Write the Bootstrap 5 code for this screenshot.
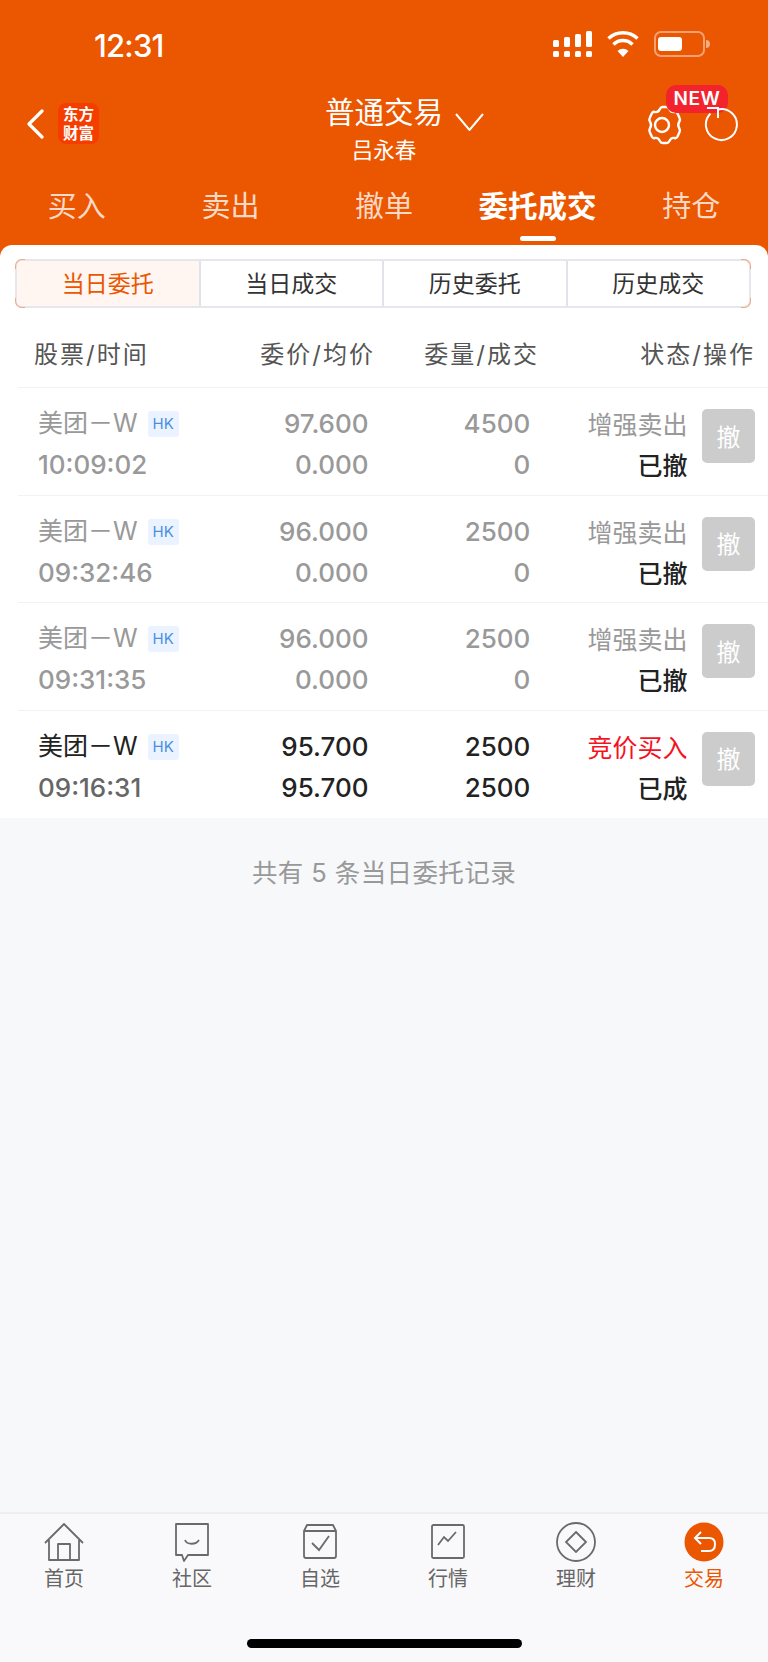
<!DOCTYPE html>
<html lang="zh">

<head>
    <meta charset="UTF-8" />
    <title>普通交易</title>
    <link href="https://cdn.jsdelivr.net/npm/bootstrap@5.3.2/dist/css/bootstrap.min.css" rel="stylesheet" />
    <style>
        html, body { height: 100%; }
        body { font-family: Inter, "Noto Sans CJK SC", sans-serif; background: #f7f8fa; color: #222; }
        .app-page { height: 1662px; }
        .app-top { background: #eb5600; height: 259px; color: #fff; }
        .status-line { height: 92px; padding: 29px 58px 0 94px; }
        .status-time { font-size: 31px; font-weight: 500; line-height: 34px; letter-spacing: -.8px; }
        .title-line { height: 76px; padding: 0 26px; }
        .title-side { width: 130px; }
        .logo-box { width: 41px; height: 41px; background: #f53d00; border-radius: 8px; font-family: "Noto Sans CJK SC", sans-serif; font-size: 15.5px; font-weight: 700; line-height: 19px; margin-left: 14px; padding-top: 1px; }
        .title-left { margin-top: 11px; }
        .title-center { font-family: "Noto Sans CJK SC", sans-serif; margin-top: -3px; }
        .title-main { font-size: 29.5px; line-height: 38px; font-weight: 400; }
        .title-sub { font-size: 21.5px; line-height: 30px; margin-top: 3px; }
        .title-arrow { margin-right: -41px; margin-left: 12px; margin-top: 24px; }
        .title-right { height: 40px; margin-top: 13px; }
        .gear-icon { margin-right: 20px; }
        .ring-icon { margin-top: 1px; margin-right: 4px; position: relative; z-index: 2; }
        .new-tag { position: absolute; left: 54px; top: -20px; width: 62px; height: 28px; background: #f3232e; border-radius: 10px; font-size: 19px; font-weight: 600; line-height: 28px; text-align: center; letter-spacing: .5px; }
        .tab-line { height: 77px; }
        .tab-line .nav-link { color: rgba(255, 255, 255, .78); font-family: "Noto Sans CJK SC", sans-serif; font-size: 29px; line-height: 38px; padding: 17px 0 0; position: relative; }
        .tab-line .nav-link.active { color: #fff; font-weight: 700; font-size: 29.5px; }
        .tab-line .nav-link.active::after { content: ""; position: absolute; left: 50%; margin-left: -18px; top: 68px; width: 36px; height: 5px; background: #fff; border-radius: 3px; }
        .white-panel { background: #fff; border-radius: 12px 12px 0 0; margin-top: -14px; position: relative; }
        .seg-wrap { padding: 14px 17px 0 15px; }
        .seg-group { height: 49px; border: 2px solid #e6e7ec; border-radius: 7px; }
        .seg-item { flex: 1 1 0; font-size: 23px; color: #333; text-align: center; line-height: 47px; border-left: 2px solid #e1e3e9; position: relative; }
        .seg-item:first-child { border-left: 0; background: #fff5f1; color: #eb5600; border-radius: 5px 0 0 5px; }
        .seg-item:first-child::before, .seg-item:first-child::after, .seg-item:last-child::before, .seg-item:last-child::after { content: ""; position: absolute; width: 10px; height: 10px; border: 0 solid #f2a985; }
        .seg-item:first-child::before { left: -2px; top: -2px; border-width: 1.5px 0 0 1.5px; border-top-left-radius: 7px; }
        .seg-item:first-child::after { left: -2px; bottom: -2px; border-width: 0 0 1.5px 1.5px; border-bottom-left-radius: 7px; }
        .seg-item:last-child::before { right: -2px; top: -2px; border-width: 1.5px 1.5px 0 0; border-top-right-radius: 7px; }
        .seg-item:last-child::after { right: -2px; bottom: -2px; border-width: 0 1.5px 1.5px 0; border-bottom-right-radius: 7px; }
        .list-head { height: 80px; padding-top: 27px; font-size: 24px; line-height: 40px; color: #555; margin-left: 18px; border-bottom: 1px solid #f2f2f4; padding-left: 16px; letter-spacing: 2px; }
        .head-a { width: 155px; }
        .head-b { width: 186px; text-align: right; }
        .head-c { width: 164px; text-align: right; }
        .head-d { width: 216px; text-align: right; }
        .order-row { height: 107.6px; margin-left: 18px; padding: 15px 13px 0 20px; border-bottom: 1px solid #f2f2f4; color: #999; font-size: 26px; font-weight: 500; line-height: 41px; }
        .order-row:last-child { border-bottom: 0; }
        .col-name { width: 191px; }
        .col-price { width: 140px; text-align: right; }
        .col-qty { width: 162px; text-align: right; }
        .col-state { width: 157.5px; text-align: right; font-family: "Noto Sans CJK SC", sans-serif; font-size: 25px; font-weight: 400; }
        .stock-name { font-size: 25px; font-weight: 400; white-space: nowrap; }
        .hk-tag { display: inline-block; width: 31px; height: 26px; margin-left: 10px; background: #eaf3ff; color: #4a90e2; border-radius: 3px; font-size: 15px; line-height: 26px; text-align: center; vertical-align: 3px; }
        .state-dark { color: #222; font-weight: 500; }
        .row-live { color: #222; }
        .row-live .state-buy { color: #f5121e; }
        .row-live .time-text { color: #666; }
        .undo-btn { width: 53px; height: 54px; margin-left: 14.5px; margin-top: 6px; padding: 0 0 2px; border: 0; border-radius: 5px; background: #ccc; color: #fff; font-family: "Noto Sans CJK SC", sans-serif; font-size: 24px; }
        .count-note { padding-top: 35px; font-size: 25.5px; line-height: 40px; color: #999; letter-spacing: .4px; }
        .bottom-bar { height: 150px; background: #f9f9fb; border-top: 2px solid #eeeef0; padding: 8px 0 0; position: relative; }
        .bar-item { flex: 1 1 0; font-size: 20px; line-height: 28px; color: #666; }
        .bar-item svg { display: block; margin: 0 auto 3px; }
        .bar-item.now { color: #eb5600; }
        .home-pill { width: 275px; height: 9px; background: #000; border-radius: 5px; position: absolute; left: 247px; top: 125px; }
    </style>
</head>

<body>
    <div class="app-page d-flex flex-column">
        <div class="app-top flex-shrink-0">
            <div class="status-line d-flex justify-content-between align-items-start">
                <div class="status-time">12:31</div>
                <svg width="160" height="32" viewBox="550 30 160 32">
                    <g fill="#fff">
                        <rect x="553" y="41" width="6" height="7" rx="1.5" /><rect x="564" y="38" width="6" height="10" rx="1.5" /><rect x="575" y="35" width="6" height="13" rx="1.5" /><rect x="586" y="32" width="6" height="16" rx="1.5" />
                        <rect x="553" y="52" width="6" height="6" rx="1.5" /><rect x="564" y="52" width="6" height="6" rx="1.5" /><rect x="575" y="52" width="6" height="6" rx="1.5" /><rect x="586" y="52" width="6" height="6" rx="1.5" />
                        <path d="M623 58l-5.500-6a8 8 0 0 1 11 0z" />
                    </g>
                    <g fill="none" stroke="#fff" stroke-width="3.500">
                        <path d="M608.500 39.500a21 21 0 0 1 29 0" />
                        <path d="M613.500 45.500a13.500 13.500 0 0 1 19 0" />
                    </g>
                    <rect x="655" y="33" width="49" height="24" rx="6" fill="none" stroke="#fff" stroke-opacity=".45" stroke-width="2" />
                    <rect x="658" y="38" width="24" height="14" rx="3" fill="#fff" />
                    <path d="M706 41a4 4 0 0 1 0 8z" fill="#fff" fill-opacity=".5" />
                </svg>
            </div>
            <div class="title-line d-flex align-items-start">
                <div class="title-side title-left d-flex align-items-center">
                    <svg width="18" height="30" viewBox="0 0 18 30"><path d="M16 2L3 15l13 13" fill="none" stroke="#fff" stroke-width="3.200" stroke-linecap="round" stroke-linejoin="round" /></svg>
                    <div class="logo-box text-center">东方<br>财富</div>
                </div>
                <div class="title-center flex-fill text-center">
                    <div class="d-flex justify-content-center align-items-center">
                        <span class="title-main">普通交易</span>
                        <svg class="title-arrow" width="29" height="18" viewBox="0 0 29 18"><path d="M1 1l13.500 16L28 1" fill="none" stroke="#fff" stroke-width="2" /></svg>
                    </div>
                    <div class="title-sub">吕永春</div>
                </div>
                <div class="title-side title-right position-relative d-flex justify-content-end">
                    <svg class="gear-icon" width="40" height="40" viewBox="0 0 40 40"><path transform="translate(20 20) rotate(90) scale(1.300 1.060) translate(-20 -20)" vector-effect="non-scaling-stroke" d="M14.500 3.500q1.500-1 3 .2 2.500 2 5 0 1.500-1.200 3-.2l3.500 2q1.500 1 1 2.700-.6 3.200 2.300 4.800 1.500.9 1.500 2.500v4q0 1.600-1.500 2.500-2.900 1.600-2.300 4.800.5 1.700-1 2.700l-3.500 2q-1.500 1-3-.2-2.500-2-5 0-1.500 1.200-3 .2l-3.500-2q-1.500-1-1-2.700.6-3.200-2.300-4.800-1.500-.9-1.500-2.500v-4q0-1.600 1.500-2.500 2.900-1.600 2.300-4.800-.5-1.700 1-2.700z" fill="none" stroke="#fff" stroke-width="2.400" stroke-linejoin="round" /><circle cx="20" cy="20" r="7" fill="none" stroke="#fff" stroke-width="2.400" /></svg>
                    <svg class="ring-icon" width="36" height="38" viewBox="0 0 36 38"><path d="M16 3.400A15.500 15.500 0 1 1 8.500 7.500" fill="none" stroke="#fff" stroke-width="2" /><path d="M5 2h11v10" fill="none" stroke="#fff" stroke-width="2" /></svg>
                    <span class="new-tag">NEW</span>
                </div>
            </div>
            <ul class="nav nav-justified tab-line">
                <li class="nav-item"><a class="nav-link" href="#">买入</a></li>
                <li class="nav-item"><a class="nav-link" href="#">卖出</a></li>
                <li class="nav-item"><a class="nav-link" href="#">撤单</a></li>
                <li class="nav-item"><a class="nav-link active" href="#">委托成交</a></li>
                <li class="nav-item"><a class="nav-link" href="#">持仓</a></li>
            </ul>
        </div>

        <div class="white-panel flex-shrink-0">
            <div class="seg-wrap">
                <div class="seg-group d-flex">
                    <div class="seg-item">当日委托</div>
                    <div class="seg-item">当日成交</div>
                    <div class="seg-item">历史委托</div>
                    <div class="seg-item">历史成交</div>
                </div>
            </div>
            <div class="list-head d-flex">
                <div class="head-a">股票/时间</div>
                <div class="head-b">委价/均价</div>
                <div class="head-c">委量/成交</div>
                <div class="head-d">状态/操作</div>
            </div>
            <div id="lista"></div>
        </div>

        <div class="count-note text-center flex-grow-1">共有 5 条当日委托记录</div>

        <div class="bottom-bar d-flex flex-shrink-0">
            <div class="bar-item text-center">
                <svg width="42" height="40" viewBox="0 0 42 40"><path d="M2 21L21 2l19 19M6 18v20h30V18M15 38V22h12v16" fill="none" stroke="#6a6a6a" stroke-width="1.800" stroke-linejoin="round" /></svg>首页
            </div>
            <div class="bar-item text-center">
                <svg width="42" height="40" viewBox="0 0 42 40"><path d="M5 2h32v31H17l-4 6-2-6H5z" fill="none" stroke="#6a6a6a" stroke-width="1.800" stroke-linejoin="round" /><path d="M14 18c2 5 11 5 14 0" fill="none" stroke="#6a6a6a" stroke-width="1.800" /></svg>社区
            </div>
            <div class="bar-item text-center">
                <svg width="42" height="40" viewBox="0 0 42 40"><path d="M5 34V9l3-6h26l3 6v25q0 2-2 2H7q-2 0-2-2zM5 9h32" fill="none" stroke="#6a6a6a" stroke-width="1.800" stroke-linejoin="round" /><path d="M13 21l7 7 10-14" fill="none" stroke="#6a6a6a" stroke-width="1.800" /></svg>自选
            </div>
            <div class="bar-item text-center">
                <svg width="42" height="40" viewBox="0 0 42 40"><rect x="5" y="3" width="32" height="33" rx="1.500" fill="none" stroke="#6a6a6a" stroke-width="1.800" /><path d="M11 23l6-8 4 4 8-9" fill="none" stroke="#6a6a6a" stroke-width="1.800" /></svg>行情
            </div>
            <div class="bar-item text-center">
                <svg width="42" height="40" viewBox="0 0 42 40"><circle cx="21" cy="20" r="19" fill="none" stroke="#6a6a6a" stroke-width="1.800" /><path d="M21 10l10 10-10 10-10-10z" fill="none" stroke="#6a6a6a" stroke-width="1.800" /></svg>理财
            </div>
            <div class="bar-item text-center now">
                <svg width="42" height="40" viewBox="0 0 42 40"><circle cx="21" cy="20" r="19.500" fill="#eb5600" /><path d="M18 10l-6 6 6 6M12 16h14q6 0 6 6 0 7-6 7h-8" fill="none" stroke="#fff" stroke-width="2" /></svg>交易
            </div>
            <div class="home-pill"></div>
        </div>
    </div>
    <script src="https://cdn.jsdelivr.net/npm/bootstrap@5.3.2/dist/js/bootstrap.bundle.min.js"></script>
    <script>
        const ordenes = [
            { hora: '10:09:02', p1: '97.600', p2: '0.000', q1: '4500', q2: '0', tipo: '增强卖出', estado: '已撤' },
            { hora: '09:32:46', p1: '96.000', p2: '0.000', q1: '2500', q2: '0', tipo: '增强卖出', estado: '已撤' },
            { hora: '09:31:35', p1: '96.000', p2: '0.000', q1: '2500', q2: '0', tipo: '增强卖出', estado: '已撤' },
            { hora: '09:16:31', p1: '95.700', p2: '95.700', q1: '2500', q2: '2500', tipo: '竞价买入', estado: '已成', vivo: true }
        ];
        const lista = document.getElementById('lista');
        ordenes.forEach(o => {
            lista.innerHTML += `<div class="order-row d-flex ${o.vivo ? 'row-live' : ''}">
                                    <div class="col-name"><div class="stock-name">美团－W<span class="hk-tag">HK</span></div><div class="time-text">${o.hora}</div></div>
                                    <div class="col-price"><div>${o.p1}</div><div>${o.p2}</div></div>
                                    <div class="col-qty"><div>${o.q1}</div><div>${o.q2}</div></div>
                                    <div class="col-state"><div class="state-buy">${o.tipo}</div><div class="state-dark">${o.estado}</div></div>
                                    <button type="button" class="undo-btn">撤</button>
                                </div>`;
        });
    </script>
</body>

</html>
